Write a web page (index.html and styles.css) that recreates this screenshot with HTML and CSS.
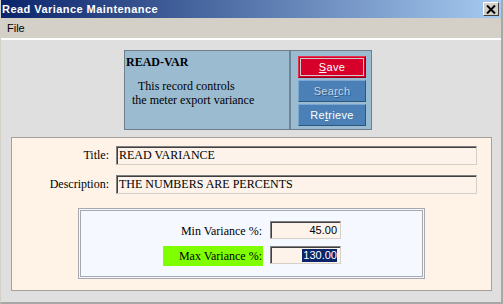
FILE: index.html
```html
<!DOCTYPE html>
<html lang="en">
<head>
    <meta charset="UTF-8">
    <title>Read Variance Maintenance</title>
    <link rel="stylesheet" href="styles.css">
</head>
<body>
    <div class="window">
        <div class="titlebar">
            <span class="title">Read Variance Maintenance</span>
            <span class="close-btn">
                <svg width="10" height="9" viewBox="0 0 10 9"><path d="M1 0.5 L9 8.5 M9 0.5 L1 8.5" stroke="#000" stroke-width="2"/></svg>
            </span>
        </div>
        <div class="menubar"><span class="menu-item">File</span></div>

        <div class="client">
            <div class="header-box">
                <div class="header-info">
                    <div class="rec-code">READ-VAR</div>
                    <div class="rec-desc">
                        <div class="line-1">This record controls</div>
                        <div class="line-2">the meter export variance</div>
                    </div>
                </div>
                <div class="header-actions">
                    <button class="btn btn-save"><u>S</u>ave</button>
                    <button class="btn" disabled>Sea<u>r</u>ch</button>
                    <button class="btn">Re<u>t</u>rieve</button>
                </div>
            </div>

            <div class="panel">
                <div class="field-grid">
                    <label>Title:</label>
                    <div class="input">READ VARIANCE</div>
                    <label>Description:</label>
                    <div class="input">THE NUMBERS ARE PERCENTS</div>
                </div>

                <div class="variance-box">
                    <div class="var-row">
                        <label>Min Variance %:</label>
                        <div class="input num">45.00</div>
                    </div>
                    <div class="var-row">
                        <label class="active">Max Variance %:</label>
                        <div class="input num"><span class="selected">130.00</span></div>
                    </div>
                </div>
            </div>
        </div>
    </div>
</body>
</html>
```

FILE: styles.css
```css
body {
    margin: 0;
    font-family: "Liberation Serif", serif;
    font-size: 12px;
    background-color: #dfdfdf;
}
.window {
    width: 503px;
    height: 304px;
    box-sizing: border-box;
    border-left: 1px solid #d4d0c8;
    border-right: 2px solid #a8a8a8;
    border-bottom: 2px solid #a8a8a8;
    background-color: #dfdfdf;
    overflow: hidden;
}
.titlebar {
    height: 18px;
    display: flex;
    align-items: center;
    justify-content: space-between;
    padding: 0 2px 0 1px;
    background: linear-gradient(to right, #0a246a, #a6caf0);
    color: white;
}
.title {
    font-family: "Liberation Sans", sans-serif;
    font-weight: bold;
    font-size: 11px;
    letter-spacing: 0.45px;
}
.close-btn {
    width: 16px;
    height: 14px;
    box-sizing: border-box;
    display: flex;
    align-items: center;
    justify-content: center;
    background-color: #d4d0c8;
    border: 1px solid;
    border-color: #ffffff #404040 #404040 #ffffff;
}
.menubar {
    height: 20px;
    display: flex;
    align-items: center;
    padding-left: 6px;
    background-color: #d4d0c8;
    border-bottom: 2px solid #ffffff;
    font-family: "Liberation Sans", sans-serif;
    font-size: 11px;
}
.client {
    padding-top: 10px;
}
.header-box {
    display: flex;
    width: 248px;
    height: 80px;
    box-sizing: border-box;
    margin-left: 123px;
    border: 1px solid #6e7e8a;
    background-color: #9bbbd0;
}
.header-info {
    width: 164px;
    padding: 3px 1px;
    box-sizing: border-box;
}
.rec-code {
    font-weight: bold;
    line-height: 16px;
}
.rec-desc {
    margin-top: 9px;
    line-height: 14px;
}
.line-1 {
    padding-left: 12px;
}
.line-2 {
    padding-left: 6px;
}
.header-actions {
    display: flex;
    flex-direction: column;
    gap: 2px;
    padding: 5px 0 0 7px;
    border-left: 2px solid #6e8494;
}
.btn {
    width: 68px;
    height: 22px;
    padding: 0;
    font-family: "Liberation Sans", sans-serif;
    font-size: 11px;
    letter-spacing: 0.3px;
    color: white;
    background-color: #4a80b6;
    border: 1px solid;
    border-color: #7aa6d2 #2a5682 #2a5682 #7aa6d2;
}
.btn:disabled {
    color: #c4d4e4;
    text-shadow: 1px 1px 0 #2f5c8a;
}
.btn-save {
    background-color: #d6002a;
    border-color: #e8304e #900018 #900018 #e8304e;
    outline: 1px solid #d0c8c8;
    outline-offset: -3px;
}
.panel {
    width: 481px;
    box-sizing: border-box;
    margin: 7px 0 0 10px;
    padding: 8px 0 11px 0;
    border: 1px solid #a4a09c;
    background-color: #fff3e8;
}
.field-grid {
    display: grid;
    grid-template-columns: 97px 361px;
    grid-auto-rows: 19px;
    column-gap: 7px;
    row-gap: 10px;
}
.field-grid label {
    text-align: right;
    line-height: 19px;
}
.input {
    box-sizing: border-box;
    padding-left: 2px;
    background-color: #fdf3ea;
    border: 1px solid;
    border-color: #808080 #d4d0c8 #d4d0c8 #808080;
    box-shadow: inset 1px 1px 0 #404040;
    line-height: 17px;
    white-space: nowrap;
    overflow: hidden;
}
.variance-box {
    width: 347px;
    box-sizing: border-box;
    margin: 14px 0 0 66px;
    padding: 10px 0;
    border: 3px double #a8a8b0;
    background-color: #f5f8fe;
    display: flex;
    flex-direction: column;
    gap: 5px;
}
.var-row {
    display: flex;
    align-items: flex-start;
    gap: 7px;
    margin-left: 82px;
}
.var-row label {
    width: 100px;
    height: 20px;
    line-height: 20px;
    padding-right: 1px;
    box-sizing: border-box;
    text-align: right;
}
.var-row label.active {
    background-color: #80ff00;
}
.num {
    width: 71px;
    height: 18px;
    padding: 0 3px 0 0;
    text-align: right;
    font-family: "Liberation Sans", sans-serif;
    font-size: 11px;
    line-height: 16px;
}
.selected {
    background-color: #0a246a;
    color: white;
    padding: 0 0 1px 1px;
}
```
